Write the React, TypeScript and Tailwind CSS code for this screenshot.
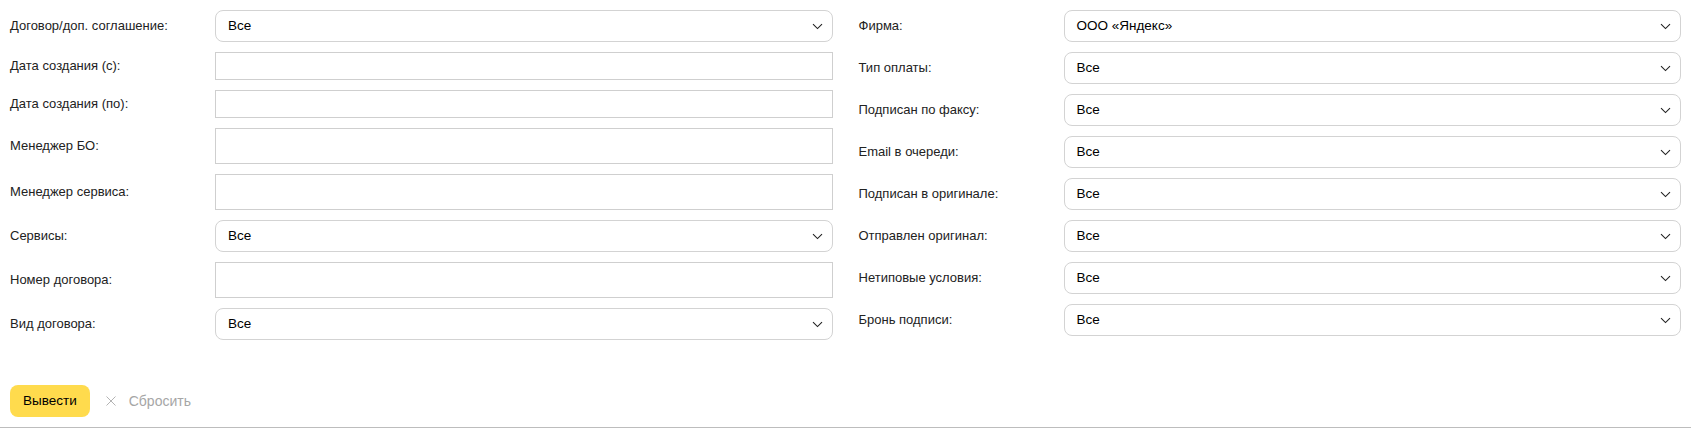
import React from "react";

type Field = { label: string; kind: "select" | "input"; value?: string; h?: string };

const left: Field[] = [
  { label: "Договор/доп. соглашение:", kind: "select", value: "Все" },
  { label: "Дата создания (с):", kind: "input", h: "h-[28px]" },
  { label: "Дата создания (по):", kind: "input", h: "h-[28px]" },
  { label: "Менеджер БО:", kind: "input", h: "h-[36px]" },
  { label: "Менеджер сервиса:", kind: "input", h: "h-[36px]" },
  { label: "Сервисы:", kind: "select", value: "Все" },
  { label: "Номер договора:", kind: "input", h: "h-[36px]" },
  { label: "Вид договора:", kind: "select", value: "Все" },
];

const right: Field[] = [
  { label: "Фирма:", kind: "select", value: "ООО «Яндекс»" },
  { label: "Тип оплаты:", kind: "select", value: "Все" },
  { label: "Подписан по факсу:", kind: "select", value: "Все" },
  { label: "Email в очереди:", kind: "select", value: "Все" },
  { label: "Подписан в оригинале:", kind: "select", value: "Все" },
  { label: "Отправлен оригинал:", kind: "select", value: "Все" },
  { label: "Нетиповые условия:", kind: "select", value: "Все" },
  { label: "Бронь подписи:", kind: "select", value: "Все" },
];

function Chevron() {
  return (
    <svg width="11" height="7" viewBox="0 0 11 7" fill="none" className="shrink-0">
      <path d="M1 1.2 L5.5 5.6 L10 1.2" stroke="#222" strokeWidth="1.1" />
    </svg>
  );
}

function Row({ f }: { f: Field }) {
  return (
    <div className="flex items-center">
      <div className="w-[205px] shrink-0 text-[13px] text-[#222]">{f.label}</div>
      {f.kind === "select" ? (
        <div className="flex-1 h-[32px] border border-[#d3d3d3] rounded-[8px] flex items-center justify-between pl-[12px] pr-[9px] text-[13.5px] font-normal text-black">
          <span>{f.value}</span>
          <Chevron />
        </div>
      ) : (
        <div className={`flex-1 ${f.h} border border-[#cfcfcf] bg-white`} />
      )}
    </div>
  );
}

export default function App() {
  return (
    <div
      className="w-[1691px] h-[428px] bg-white border-b border-[#bdbdbd] px-[10px] pt-[10px] box-border"
      style={{ fontFamily: '"Liberation Sans", Arial, sans-serif' }}
    >
      <div className="flex gap-[26px]">
        <div className="flex-1 flex flex-col gap-[10px]">
          {left.map((f) => (
            <Row key={f.label} f={f} />
          ))}
        </div>
        <div className="flex-1 flex flex-col gap-[10px]">
          {right.map((f) => (
            <Row key={f.label} f={f} />
          ))}
        </div>
      </div>
      <div className="mt-[45px] flex items-center">
        <button className="h-[32px] px-[13px] rounded-[8px] bg-[#ffdb4d] text-[13.5px] font-normal text-black">
          Вывести
        </button>
        <div className="flex items-center ml-[16px] text-[#a6a6a6] text-[14px]">
          <svg width="10" height="10" viewBox="0 0 10 10" className="mr-[13px]">
            <path d="M0.5 0.5 L9.5 9.5 M9.5 0.5 L0.5 9.5" stroke="#b3b3b3" strokeWidth="1" />
          </svg>
          <span>Сбросить</span>
        </div>
      </div>
    </div>
  );
}
